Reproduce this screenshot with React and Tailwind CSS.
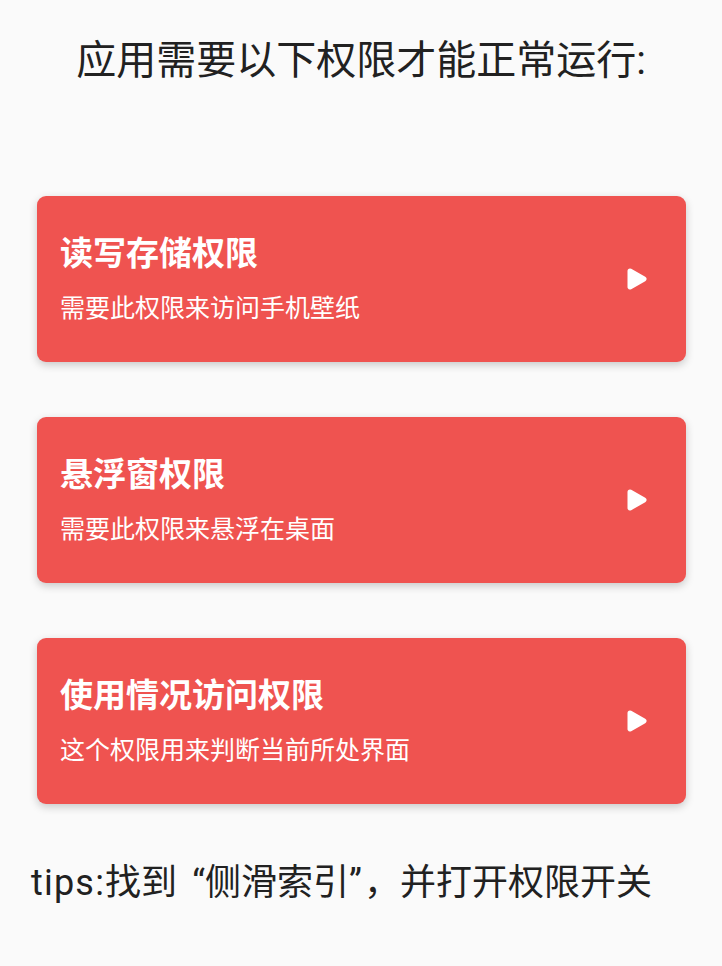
import React from 'react';

const permissions = [
  { title: '读写存储权限', desc: '需要此权限来访问手机壁纸' },
  { title: '悬浮窗权限', desc: '需要此权限来悬浮在桌面' },
  { title: '使用情况访问权限', desc: '这个权限用来判断当前所处界面' },
];

function PlayArrow() {
  return (
    <svg width="20" height="22" viewBox="0 0 20 22" className="shrink-0">
      <polygon
        points="3,3 17,11 3,19"
        fill="#ffffff"
        stroke="#ffffff"
        strokeWidth="5"
        strokeLinejoin="round"
      />
    </svg>
  );
}

function PermissionCard({ item }) {
  return (
    <div className="bg-[#ef5350] rounded-[9px] shadow-[0_3px_8px_rgba(0,0,0,0.2)] flex items-center justify-between pl-[23px] pr-[39px] pt-[38px] pb-[38px]">
      <div className="flex flex-col gap-[20px]">
        <div className="text-[33px] leading-[40px] font-bold text-white">{item.title}</div>
        <div className="text-[25px] leading-[30px] text-white">{item.desc}</div>
      </div>
      <PlayArrow />
    </div>
  );
}

export default function App() {
  return (
    <div
      className="min-h-[966px] w-full bg-[#fafafa] text-[#212121]"
      style={{ fontFamily: 'Roboto, "Noto Sans CJK SC", sans-serif' }}
    >
      <div className="pt-[31px] text-center text-[40px] leading-[60px]">应用需要以下权限才能正常运行:</div>

      <div className="flex flex-col gap-[55px] pl-[37px] pr-[36px] mt-[105px]">
        {permissions.map((p) => (
          <PermissionCard key={p.title} item={p} />
        ))}
      </div>

      <div className="mt-[52px] pl-[31px] text-[36px] leading-[54px] whitespace-nowrap">
        <span className="tracking-[1.2px]">tips:</span>找到<span className="inline-block w-[28px] text-right">“</span>侧滑索引<span className="inline-block w-[15px]">”</span>，并打开权限开关
      </div>
    </div>
  );
}
